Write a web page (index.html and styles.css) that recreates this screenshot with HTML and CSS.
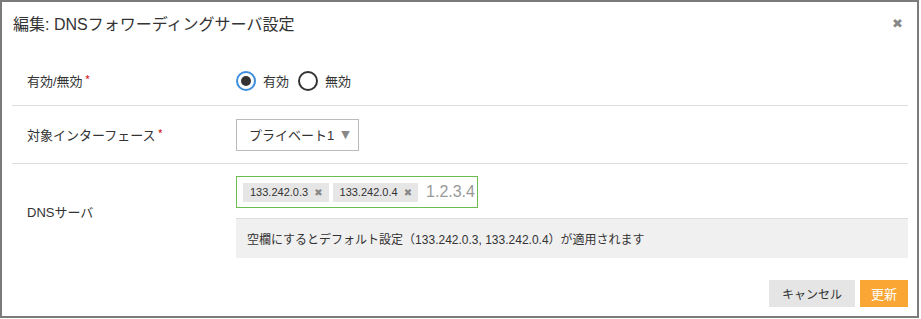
FILE: index.html
```html
<!DOCTYPE html>
<html lang="ja">
<head>
  <meta charset="UTF-8" />
  <title>編集: DNSフォワーディングサーバ設定</title>
  <link rel="stylesheet" href="styles.css">
</head>
<body>
  <div class="modal">
    <div class="modal-header">
      <h1>編集: DNSフォワーディングサーバ設定</h1>
      <span class="close">&#10006;</span>
    </div>

    <div class="modal-body">
      <div class="form-row row-enable">
        <div class="label">有効/無効<span class="req">*</span></div>
        <div class="field radios">
          <label class="radio"><span class="circle checked"></span>有効</label>
          <label class="radio"><span class="circle"></span>無効</label>
        </div>
      </div>

      <div class="form-row row-iface">
        <div class="label">対象インターフェース<span class="req">*</span></div>
        <div class="field">
          <div class="select">プライベート1<span class="arrow">&#9660;</span></div>
        </div>
      </div>

      <div class="form-row row-dns">
        <div class="label">DNSサーバ</div>
        <div class="field dns-field">
          <div class="tag-input">
            <span class="tag">133.242.0.3<span class="tag-x">&#10006;</span></span>
            <span class="tag">133.242.0.4<span class="tag-x">&#10006;</span></span>
            <span class="placeholder">1.2.3.4</span>
          </div>
          <div class="help">空欄にするとデフォルト設定（133.242.0.3, 133.242.0.4）が適用されます</div>
        </div>
      </div>
    </div>

    <div class="modal-footer">
      <button class="btn btn-cancel">キャンセル</button>
      <button class="btn btn-primary">更新</button>
    </div>
  </div>
</body>
</html>
```

FILE: styles.css
```css
body {
  margin: 0;
  font-family: "Liberation Sans", "Noto Sans CJK JP", sans-serif;
  color: #333;
  background: #fff;
}
.modal {
  width: 919px;
  height: 318px;
  box-sizing: border-box;
  border: 2px solid #7b7b7b;
  background: #fff;
}
.modal-header {
  height: 54px;
  box-sizing: border-box;
  padding: 12px 14px 0 11px;
  display: flex;
  justify-content: space-between;
  align-items: flex-start;
}
h1 {
  margin: 0;
  font-size: 16px;
  font-weight: normal;
  line-height: 22px;
  color: #333;
}
.close {
  font-family: "DejaVu Sans", sans-serif;
  font-size: 13px;
  line-height: 14px;
  margin-top: 3px;
  color: #888;
}
.modal-body {
  padding: 0 9px 0 10px;
}
.form-row {
  display: grid;
  grid-template-columns: 224px 1fr;
  align-items: center;
  border-bottom: 1px solid #ddd;
}
.row-enable { height: 50px; box-sizing: border-box; }
.row-iface { height: 58px; box-sizing: border-box; }
.row-dns { border-bottom: none; }
.label {
  padding-left: 15px;
  font-size: 13px;
}
.req {
  font-family: "Noto Sans CJK JP", sans-serif;
  color: #d9262c;
  font-size: 12px;
  position: relative;
  top: -1px;
  margin-left: 2px;
}
.radios {
  display: flex;
  align-items: center;
  gap: 9px;
  font-size: 13px;
}
.radio {
  display: flex;
  align-items: center;
  gap: 7px;
}
.circle {
  width: 20px;
  height: 20px;
  box-sizing: border-box;
  border: 2px solid #333;
  border-radius: 50%;
  display: flex;
  align-items: center;
  justify-content: center;
}
.circle.checked {
  border-color: #3d8fdc;
}
.circle.checked::after {
  content: "";
  width: 10px;
  height: 10px;
  border-radius: 50%;
  background: #333;
}
.select {
  display: inline-flex;
  align-items: center;
  height: 32px;
  box-sizing: border-box;
  border: 1px solid #bbb;
  padding: 0 8px 0 12px;
  font-size: 13px;
}
.arrow {
  font-family: "DejaVu Sans", sans-serif;
  color: #888;
  font-size: 11px;
  margin-left: 7px;
}
.dns-field {
  padding: 12px 0 1px;
}
.tag-input {
  display: inline-flex;
  align-items: center;
  gap: 4px;
  height: 32px;
  box-sizing: border-box;
  border: 1px solid #6cbd4f;
  padding: 0 2px 0 6px;
}
.tag {
  display: inline-flex;
  align-items: center;
  height: 19px;
  background: #e6e6e6;
  padding: 0 6px 0 7px;
  font-size: 11px;
}
.tag-x {
  font-family: "DejaVu Sans", sans-serif;
  color: #888;
  font-size: 10px;
  margin-left: 6px;
}
.placeholder {
  color: #999;
  font-size: 16px;
  margin-left: 4px;
}
.help {
  margin-top: 10px;
  height: 40px;
  box-sizing: border-box;
  border-top: 1px solid #ddd;
  background: #f0f0f0;
  padding-left: 11px;
  display: flex;
  align-items: center;
  font-size: 12px;
}
.modal-footer {
  display: flex;
  justify-content: flex-end;
  gap: 5px;
  padding: 21px 9px 0 0;
}
.btn {
  height: 27px;
  border: none;
  font-family: inherit;
  font-size: 12px;
  padding: 0 13px;
  cursor: pointer;
}
.btn-cancel {
  background: #e5e5e5;
  color: #333;
}
.btn-primary {
  background: #f9a634;
  color: #fff;
  font-size: 13px;
  padding: 0 11px;
}
```
